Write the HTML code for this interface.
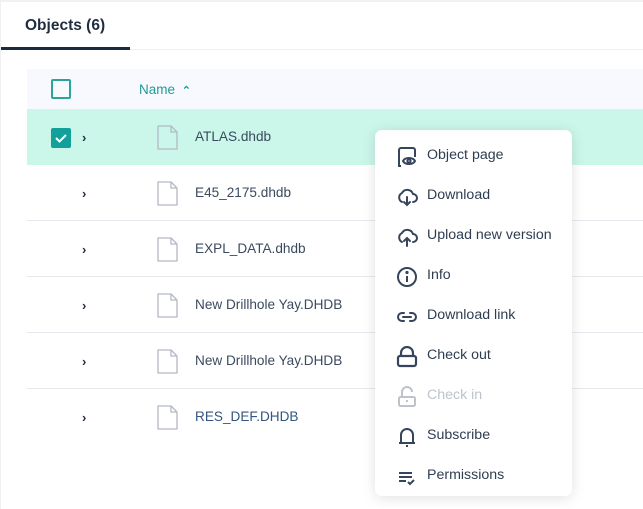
<!DOCTYPE html>
<html><head><meta charset="utf-8"><style>
*{box-sizing:border-box;margin:0;padding:0}
body{width:643px;height:509px;background:#fff;font-family:"Liberation Sans",sans-serif;position:relative;overflow:hidden;color:#3b4a5f}
.top{position:absolute;left:0;top:0;width:643px;height:2px;background:#f1f2f4}
.lb{position:absolute;left:0;top:0;width:1px;height:509px;background:#eef0f2}
.tab{position:absolute;left:25px;top:17px;font-size:15.5px;font-weight:bold;color:#1f2d40}
.tabline{position:absolute;left:0;top:49px;width:643px;height:1px;background:#eeeff1}
.tabul{position:absolute;left:1px;top:47px;width:129px;height:3px;background:#1d2b40}
.hdr{position:absolute;left:27px;top:69px;width:616px;height:40px;background:#f8f9fe}
.cb{position:absolute;left:51px;width:20px;height:20px;border:2px solid #2aa59a;border-radius:2px}
.name{position:absolute;left:139px;top:82px;font-size:13.5px;color:#1f9b93}
.row{position:absolute;left:27px;width:616px;height:56px;border-bottom:1px solid #e6e9ee}
.row.sel{background:#cbf6ea;border-bottom:none}
.chev{position:absolute;left:55px;top:21px;font-size:13px;font-weight:bold;color:#1f2d40}
.file{position:absolute;left:129px;top:16px}
.fn{position:absolute;left:168px;top:20px;font-size:13.6px;color:#3b4a5f}
.menu{position:absolute;left:375px;top:130px;width:197px;height:366px;background:#fff;border-radius:7px;box-shadow:0 2px 14px rgba(0,0,0,.12)}
.it{position:absolute;left:0;height:40px;width:197px}
.it svg{position:absolute;left:21px;top:10px}
.it span{position:absolute;left:52px;top:11px;font-size:14.2px;color:#2f3d52}
.dis span{color:#bcc3cd}
</style></head><body>
<div class="top"></div><div class="lb"></div>
<div class="tab">Objects (6)</div>
<div class="tabline"></div><div class="tabul"></div>
<div class="hdr"></div>
<div class="cb" style="top:79px"></div>
<div class="name">Name <span style="font-size:11px;font-weight:bold;margin-left:3px">&#8963;</span></div>

<div class="row sel" style="top:109px"><div class="chev">&#8250;</div><svg class="file" width="24" height="26" viewBox="0 0 24 26"><path d="M2 1h13l6 6v17H2z" fill="none" stroke="#b3bac4" stroke-width="1.3" stroke-linejoin="round"/><path d="M15 1v6h6" fill="none" stroke="#b3bac4" stroke-width="1.3"/></svg><div class="fn">ATLAS.dhdb</div></div>
<div style="position:absolute;left:51px;top:128px;width:20px;height:20px;background:#14a09a;border-radius:2px"><svg width="20" height="20"><path d="M5 10l3.5 3.5L15 7" fill="none" stroke="#fff" stroke-width="2"/></svg></div>
<div class="row" style="top:165px"><div class="chev">&#8250;</div><svg class="file" width="24" height="26" viewBox="0 0 24 26"><path d="M2 1h13l6 6v17H2z" fill="none" stroke="#b3bac4" stroke-width="1.3" stroke-linejoin="round"/><path d="M15 1v6h6" fill="none" stroke="#b3bac4" stroke-width="1.3"/></svg><div class="fn">E45_2175.dhdb</div></div>
<div class="row" style="top:221px"><div class="chev">&#8250;</div><svg class="file" width="24" height="26" viewBox="0 0 24 26"><path d="M2 1h13l6 6v17H2z" fill="none" stroke="#b3bac4" stroke-width="1.3" stroke-linejoin="round"/><path d="M15 1v6h6" fill="none" stroke="#b3bac4" stroke-width="1.3"/></svg><div class="fn">EXPL_DATA.dhdb</div></div>
<div class="row" style="top:277px"><div class="chev">&#8250;</div><svg class="file" width="24" height="26" viewBox="0 0 24 26"><path d="M2 1h13l6 6v17H2z" fill="none" stroke="#b3bac4" stroke-width="1.3" stroke-linejoin="round"/><path d="M15 1v6h6" fill="none" stroke="#b3bac4" stroke-width="1.3"/></svg><div class="fn">New Drillhole Yay.DHDB</div></div>
<div class="row" style="top:333px"><div class="chev">&#8250;</div><svg class="file" width="24" height="26" viewBox="0 0 24 26"><path d="M2 1h13l6 6v17H2z" fill="none" stroke="#b3bac4" stroke-width="1.3" stroke-linejoin="round"/><path d="M15 1v6h6" fill="none" stroke="#b3bac4" stroke-width="1.3"/></svg><div class="fn">New Drillhole Yay.DHDB</div></div>
<div class="row" style="top:389px;border-bottom:none"><div class="chev">&#8250;</div><svg class="file" width="24" height="26" viewBox="0 0 24 26"><path d="M2 1h13l6 6v17H2z" fill="none" stroke="#b3bac4" stroke-width="1.3" stroke-linejoin="round"/><path d="M15 1v6h6" fill="none" stroke="#b3bac4" stroke-width="1.3"/></svg><div class="fn" style="color:#34557f">RES_DEF.DHDB</div></div>

<div class="menu">
<div class="it" style="top:6px"><svg width="22" height="22" viewBox="0 0 22 22" fill="none" stroke="#36455c" stroke-width="2"><path d="M5 20H3V4a2 2 0 0 1 2-2h12a2 2 0 0 1 2 2v7"/><path d="M7 15c2-4 10-4 12 0c-2 4-10 4-12 0z"/><circle cx="13" cy="15" r="1.6"/></svg><span>Object page</span></div>
<div class="it" style="top:46px"><svg width="22" height="22" viewBox="0 0 22 22" fill="none" stroke="#36455c" stroke-width="2" stroke-linecap="round"><path d="M6 16a5 5 0 0 1 0-9a6 6 0 0 1 11 1a4 4 0 0 1 0 8"/><path d="M11 11v8M8 16l3 3 3-3"/></svg><span>Download</span></div>
<div class="it" style="top:86px"><svg width="22" height="22" viewBox="0 0 22 22" fill="none" stroke="#36455c" stroke-width="2" stroke-linecap="round"><path d="M6 16a5 5 0 0 1 0-9a6 6 0 0 1 11 1a4 4 0 0 1 0 8"/><path d="M11 20v-8M8 15l3-3 3 3"/></svg><span>Upload new version</span></div>
<div class="it" style="top:126px"><svg width="22" height="22" viewBox="0 0 22 22" fill="none" stroke="#36455c" stroke-width="2"><circle cx="11" cy="11" r="9"/><path d="M11 10v6"/><circle cx="11" cy="6.5" r=".6" fill="#36455c"/></svg><span>Info</span></div>
<div class="it" style="top:166px"><svg width="22" height="22" viewBox="0 0 22 22" fill="none" stroke="#36455c" stroke-width="2" stroke-linecap="round"><path d="M8 7H6a4 4 0 0 0 0 8h2M14 7h2a4 4 0 0 1 0 8h-2M7 11h8"/></svg><span>Download link</span></div>
<div class="it" style="top:206px"><svg width="22" height="22" viewBox="0 0 22 22" fill="none" stroke="#36455c" stroke-width="2.2"><rect x="2" y="10" width="18" height="10" rx="2"/><path d="M5 10V7a6 6 0 0 1 12 0v3"/></svg><span>Check out</span></div>
<div class="it dis" style="top:246px"><svg width="22" height="22" viewBox="0 0 22 22" fill="none" stroke="#bcc3cd" stroke-width="2"><rect x="3" y="11" width="16" height="9" rx="1.5"/><path d="M6 11V6a5 5 0 0 1 10 0"/><path d="M10 15h2"/></svg><span>Check in</span></div>
<div class="it" style="top:286px"><svg width="22" height="22" viewBox="0 0 22 22" fill="none" stroke="#36455c" stroke-width="2"><path d="M5 17V9a6 6 0 0 1 12 0v8zM3 17h16M10 20h2M11 2v1"/></svg><span>Subscribe</span></div>
<div class="it" style="top:326px"><svg width="22" height="22" viewBox="0 0 22 22" fill="none" stroke="#36455c" stroke-width="2"><path d="M3 7h13M3 11h13M3 15h7M12 16l2 2 4-4"/></svg><span>Permissions</span></div>
</div>
</body></html>
